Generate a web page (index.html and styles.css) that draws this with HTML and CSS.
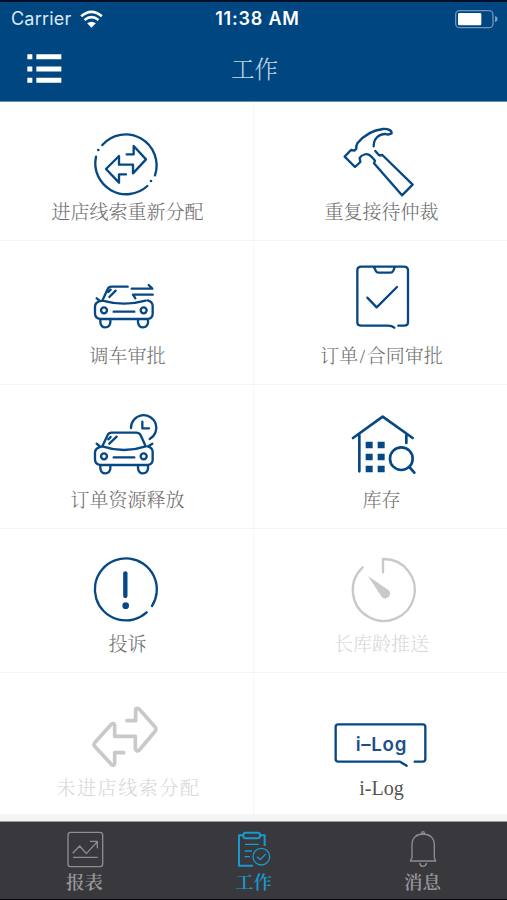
FILE: index.html
```html
<!DOCTYPE html>
<html lang="zh-CN">
<head>
<meta charset="utf-8">
<title>工作</title>
<link rel="stylesheet" href="styles.css">
</head>
<body>
<div class="app">
  <header class="header">
    <div class="status">
      <div class="carrier"><span class="carrier-name">Carrier</span>
        <svg class="wifi" viewBox="242 26 68 54"><path d="M245 45Q276 18 307 45M255 56Q276 39 297 56" fill="none" stroke="#fff" stroke-width="8"/><path d="M263 66Q276 56 289 66L276 79Z" fill="#fff"/></svg>
      </div>
      <div class="time">11:38 AM</div>
      <svg class="battery" viewBox="606 24 135 60"><rect x="611" y="29" width="112" height="51" rx="12" fill="none" stroke="#6f95b9" stroke-width="4"/><rect x="618" y="36" width="70" height="37" rx="4" fill="#fff"/><path d="M729 45Q737 47 737 54T729 64Z" fill="#7c9dbd"/></svg>
    </div>
    <div class="navbar">
      <svg class="menu" viewBox="81 156 105 93"><path d="M82 167h15M109 167h75M82 204h15M109 204h75M82 238h15M109 238h75" stroke="#fff" stroke-width="15"/></svg>
      <h1 class="title">工作</h1>
      <span></span>
    </div>
  </header>

  <main class="grid">
    <div class="cell">
      <svg class="icon" viewBox="111 12 300 240"><path d="M187 90A93 93 0 0 1 345 181M322 213A93 93 0 0 1 168 125"/><path d="M258 178H237V203L198 162L237 123V149H279V175L318 133L281 93V118H260"/><circle class="solid" cx="175" cy="105" r="4"/><circle class="solid" cx="333" cy="198" r="4"/></svg>
      <div class="label">进店线索重新分配</div>
    </div>
    <div class="cell">
      <svg class="icon" viewBox="93 12 300 240"><path d="M221 94C221 71 236 57 256 57Q266 61 275 55C275 46 264 41 249 42C218 45 192 61 172 85Q168 92 169 101L163 107L153 105L134 125L165 156L181 141L179 129C186 118 200 115 208 120Q216 125 225 137L222 145L306 241L338 209L247 120L237 121L226 108"/></svg>
      <div class="label">重复接待仲裁</div>
    </div>
    <div class="cell">
      <svg class="icon" viewBox="111 24 300 240"><path d="M263 95H215Q206 95 203 102L187 137Q252 155 317 137M187 137L177 139Q165 144 165 155V175Q165 190 180 192H325Q338 188 338 176V153Q338 140 323 136M170 130L178 136M181 195V202Q183 217 196 217T211 203V195M294 195V202Q296 217 309 217T324 203V195M221 170H283M205 111L212 104M208 126L227 107M275 101H337L326 90M338 119H279L286 130"/><circle cx="192" cy="166" r="9"/><circle cx="311" cy="166" r="9"/></svg>
      <div class="label">调车审批</div>
    </div>
    <div class="cell">
      <svg class="icon" viewBox="93 24 300 240"><path d="M283 218Q276 212 264 212H184Q172 212 172 202V46Q172 35 184 35H311Q324 35 324 46V202Q324 212 312 212H295M222 37L228 49Q230 53 235 53H271Q277 53 280 47L284 37M202 128L230 157L291 96"/></svg>
      <div class="label">订单<span class="slash">/</span>合同审批</div>
    </div>
    <div class="cell">
      <svg class="icon" viewBox="111 21 300 240"><path d="M187 139L203 105Q206 98 215 98H288Q298 98 302 106L317 139Q252 161 187 139L177 142Q165 147 165 158V178Q165 193 180 195H325Q338 191 338 179V156Q338 143 323 139M170 131L178 138M337 131L326 138M181 198V205Q183 220 196 220T211 206V198M294 198V205Q296 220 309 220T324 206V198M221 172H283M205 118L212 111M208 131L230 110M273 84A38 38 0 1 1 329 117M307 65V85H327"/><circle cx="192" cy="169" r="9"/><circle cx="311" cy="169" r="9"/></svg>
      <div class="label">订单资源释放</div>
    </div>
    <div class="cell">
      <svg class="icon" viewBox="93 21 300 240"><g stroke-width="8"><path d="M159 114L248 50L338 114M178 104V214M319 105V129"/><circle cx="304" cy="176" r="34"/><path d="M328 201L343 218"/></g><path class="block" d="M197 125h21v20h-21zM233 125h21v20h-21zM197 161h21v20h-21zM233 161h21v20h-21zM197 197h21v20h-21zM233 197h21v20h-21z"/></svg>
      <div class="label">库存</div>
    </div>
    <div class="cell">
      <svg class="icon" viewBox="111 16 300 240"><path d="M336 181A93 93 0 1 0 320 200"/><path d="M256 83V151" stroke-width="13"/><circle class="block" cx="257" cy="180" r="10"/></svg>
      <div class="label">投诉</div>
    </div>
    <div class="cell off">
      <svg class="icon" viewBox="93 18 300 240"><path d="M188 67A93 93 0 1 0 249 42V82"/><path class="block" d="M204 93L266 136C278 147 263 167 248 158Q244 155 242 151Z"/></svg>
      <div class="label">长库龄推送</div>
    </div>
    <div class="cell off">
      <svg class="icon" viewBox="111 15 300 240"><path stroke-width="11" d="M251 188H224V220Q222 230 214 223L164 169Q160 164 164 158L214 103Q223 97 224 106V139H286V176Q289 187 298 180L346 123Q349 118 346 112L298 58Q287 50 287 61V92H261"/></svg>
      <div class="label wide">未进店线索分配</div>
    </div>
    <div class="cell">
      <svg class="icon" viewBox="873 15 300 240"><path d="M1100 227L1080 215H895Q887 215 887 207V110Q887 103 895 103H1148Q1156 103 1156 110V207Q1156 215 1148 215H1124"/><text class="logo-text" x="1023" y="182" text-anchor="middle" textLength="152">i–Log</text></svg>
      <div class="label latin">i-Log</div>
    </div>
  </main>

  <nav class="tabs">
    <div class="tab">
      <svg class="tab-icon" viewBox="75 57 120 120"><rect x="84" y="67" width="104" height="103" rx="8"/><path d="M98 130L119 108L139 131L170 97M150 94H172V115M99 142H173"/></svg>
      <div class="tab-label">报表</div>
    </div>
    <div class="tab active">
      <svg class="tab-icon" viewBox="582 57 120 120"><path stroke-width="6" d="M609 76H597V167H639M660 76H674V108"/><rect stroke-width="6" x="610" y="68" width="50" height="17" rx="7"/><path d="M615 103H656M614 123H636M614 140H630M651 140L661 149L677 132"/><circle cx="664" cy="140" r="25"/></svg>
      <div class="tab-label">工作</div>
    </div>
    <div class="tab">
      <svg class="tab-icon" viewBox="1089 57 120 120"><path d="M1116 143V104C1116 83 1130 72 1149 72S1183 83 1183 104V143L1187 153H1111ZM1139 159Q1141 169 1149 169T1160 159"/><circle cx="1149" cy="69" r="4"/></svg>
      <div class="tab-label">消息</div>
    </div>
  </nav>
</div>
</body>
</html>
```
FILE: styles.css
```css
* { box-sizing: border-box; }

body {
  margin: 0;
  background: #f5f5f6;
  font-family: "Liberation Serif", "Noto Serif CJK SC", "Noto Sans CJK SC", serif;
}

.app {
  width: 507px;
  height: 900px;
  display: flex;
  flex-direction: column;
  overflow: hidden;
}

.header {
  height: 102px;
  flex: none;
  background: #004681;
  border-top: 2px solid #020f26;
  border-bottom: 1px solid #6b8eac;
  color: #fff;
}

.status {
  height: 33px;
  display: grid;
  grid-template-columns: 1fr auto 1fr;
  align-items: center;
  padding: 0 8px 0 11px;
  font-family: Inter, "Liberation Sans", sans-serif;
  font-size: 18px;
  line-height: 33px;
}

.carrier { display: flex; align-items: center; gap: 9px; }
.carrier-name { color: #dce8f3; letter-spacing: 0.2px; }
.wifi { width: 23px; height: 18px; }
.time { padding-left: 5px; font-weight: 600; letter-spacing: 0.8px; }
.battery { width: 45px; height: 20px; justify-self: end; }

.navbar {
  height: 66px;
  display: grid;
  grid-template-columns: 1fr auto 1fr;
  align-items: center;
  padding: 0 25px 0 27px;
}

.menu { width: 35px; height: 31px; }

.title {
  margin: 0;
  padding-top: 4px;
  color: #c5d6e5;
  font-size: 23.5px;
  font-weight: 300;
  line-height: 32px;
}

.grid {
  flex: none;
  display: grid;
  grid-template-columns: 254px 253px;
  grid-template-rows: 139px 144px 144px 144px 141px;
  background: #fff;
}

.cell {
  display: flex;
  flex-direction: column;
  align-items: center;
  justify-content: flex-end;
  padding-bottom: 17px;
  border-bottom: 1px solid #f3f3f3;
  color: #6c6c6c;
}

.cell:nth-child(odd) { border-right: 1px solid #f5f5f5; }
.cell:nth-last-child(-n+2) { padding-bottom: 14px; border-bottom: 0; padding-bottom: 15px; }

.icon {
  width: 100px;
  height: 80px;
  fill: none;
  stroke: #064883;
  stroke-width: 7;
  stroke-linecap: round;
  stroke-linejoin: round;
}

.icon .solid, .icon .block { fill: #064883; stroke: none; }

.logo-text {
  font: 600 56px Inter, "Liberation Sans", sans-serif;
  fill: #1d4f8c;
  stroke: none;
}

.label {
  height: 24px;
  padding-left: 2px;
  font-size: 19px;
  font-weight: 300;
  line-height: 27px;
  white-space: nowrap;
}

.label.wide { padding-left: 4px; letter-spacing: 1.6px; }
.label.latin { color: #555; font-size: 20px; }
.slash { padding: 0 1.5px; }

.off { color: #d6d6d6; }
.off .icon { stroke: #c9c9c9; }
.off .icon .block { fill: #c9c9c9; }

.tabs {
  height: 79px;
  margin-top: auto;
  flex: none;
  display: grid;
  grid-template-columns: repeat(3, 1fr);
  background: #39383d;
  border-top: 1px solid #9b9b9f;
  border-bottom: 1px solid #07060a;
  color: #97979b;
}

.tab {
  display: flex;
  flex-direction: column;
  align-items: center;
  padding-top: 7px;
}

.tab-icon {
  width: 40px;
  height: 40px;
  fill: none;
  stroke: #8e8e92;
  stroke-width: 4;
  stroke-linejoin: round;
}

.tab-label {
  font-size: 18.5px;
  font-weight: 600;
  line-height: 29px;
}

.active { color: #169bce; }
.active .tab-icon { stroke: #169bce; }
```
